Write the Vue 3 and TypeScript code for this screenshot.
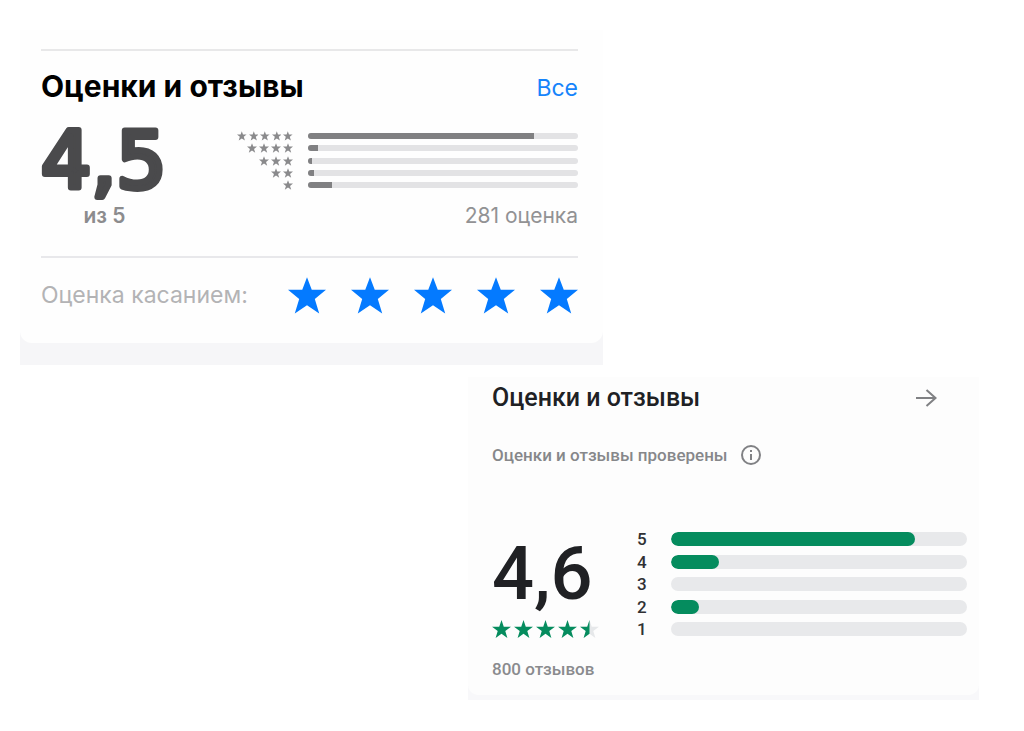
<script setup lang="ts">
interface Row {
  stars: number
  share: number
}

const storeRows: Row[] = [
  { stars: 5, share: 83.7 },
  { stars: 4, share: 3.8 },
  { stars: 3, share: 1.6 },
  { stars: 2, share: 2.2 },
  { stars: 1, share: 9 },
]

const playRows: Row[] = [
  { stars: 5, share: 82.5 },
  { stars: 4, share: 16.2 },
  { stars: 3, share: 0 },
  { stars: 2, share: 9.6 },
  { stars: 1, share: 0 },
]

const tapStar = '56,0 70,37 112,37 79,64 92,107 56,83 20,107 33,64 0,37 42,37'
const playStar = '10,0 12.4,7 20,7 14,11.6 16.2,19 10,14.6 3.8,19 6,11.6 0,7 7.6,7'
</script>

<template>
  <main class="page">
    <section class="store" aria-labelledby="store-title">
      <div class="store-sheet">
        <header class="store-head">
          <h2 id="store-title">Оценки и отзывы</h2>
          <a href="#all">Все</a>
        </header>
        <div class="store-summary">
          <div class="store-score">
            <svg class="store-value" viewBox="0 0 140 116" role="img" aria-label="4,5">
              <text x="0" y="84">4,5</text>
            </svg>
            <p class="store-of">из 5</p>
          </div>
          <div class="store-stats">
            <ul class="store-rows">
              <li v-for="row in storeRows" :key="row.stars">
                <span class="mini-stars">
                  <svg v-for="n in row.stars" :key="n" viewBox="0 0 112 108"><polygon :points="tapStar" /></svg>
                </span>
                <span class="store-track"><span class="store-fill" :style="{ width: row.share + '%' }"></span></span>
              </li>
            </ul>
            <p class="store-count">281 оценка</p>
          </div>
        </div>
        <div class="tap">
          <span class="tap-label">Оценка касанием:</span>
          <div class="tap-stars">
            <button v-for="n in 5" :key="n" type="button" :aria-label="`${n} из 5`">
              <svg viewBox="0 0 112 108"><polygon :points="tapStar" /></svg>
            </button>
          </div>
        </div>
      </div>
    </section>

    <section class="play" aria-labelledby="play-title">
      <div class="play-sheet">
        <header class="play-head">
          <h2 id="play-title">Оценки и отзывы</h2>
          <button type="button" class="icon-button" aria-label="Все отзывы">
            <svg class="arrow" viewBox="0 0 22 20"><path d="M1 10H20M11.5 2L20.5 10L11.5 18" /></svg>
          </button>
        </header>
        <div class="verified">
          <span>Оценки и отзывы проверены</span>
          <button type="button" class="icon-button" aria-label="Подробнее">
            <svg class="info" viewBox="0 0 20 20">
              <circle cx="10" cy="10" r="9" />
              <path d="M10 9V15M10 5V7" />
            </svg>
          </button>
        </div>
        <div class="play-body">
          <div class="play-score">
            <p class="play-value">4,6</p>
            <div class="play-stars" role="img" aria-label="4,6 из 5">
              <svg v-for="n in 4" :key="n" viewBox="0 0 20 19"><polygon :points="playStar" /></svg>
              <svg viewBox="0 0 20 19">
                <polygon class="empty" :points="playStar" />
                <polygon points="10,0 10,14.6 3.8,19 6,11.6 0,7 7.6,7" />
              </svg>
            </div>
            <p class="play-count">800 отзывов</p>
          </div>
          <ul class="play-rows">
            <li v-for="row in playRows" :key="row.stars">
              <span class="play-label">{{ row.stars }}</span>
              <span class="play-track"><span class="play-fill" :style="{ width: row.share + '%' }"></span></span>
            </li>
          </ul>
        </div>
      </div>
    </section>
  </main>
</template>

<style>
body {
  margin: 0;
  background: #fff;
}
</style>

<style scoped>
h2,
p,
ul {
  margin: 0;
  padding: 0;
}
ul {
  list-style: none;
}
svg {
  display: block;
}
button {
  padding: 0;
  border: 0;
  background: none;
  cursor: pointer;
}
.page {
  display: grid;
  grid-template-columns: 448fr 135fr 376fr;
  row-gap: 12px;
  padding: 30px 45px 31px 20px;
}

.store {
  grid-column: 1 / 3;
  padding-bottom: 22px;
  background: #f6f6f8;
  font-family: Inter, "Liberation Sans", sans-serif;
  font-optical-sizing: none;
}
.store-sheet {
  padding: 19px 25px 29px 21px;
  border-radius: 0 0 12px 12px;
  background: #fefefe;
}
.store-head {
  display: flex;
  align-items: center;
  justify-content: space-between;
  height: 70px;
  padding-bottom: 2px;
  border-top: 2px solid #e8e8e9;
}
.store-head h2 {
  font-size: 30px;
  font-weight: 700;
  color: #000;
}
.store-head a {
  padding-top: 4px;
  font-size: 23px;
  color: #1684fb;
  text-decoration: none;
}
.store-summary {
  display: flex;
  height: 133px;
  border-bottom: 2px solid #e8e8eb;
}
.store-score {
  flex: none;
  width: 196px;
}
.store-value {
  width: 140px;
  height: 116px;
  margin-top: -19px;
}
.store-value text {
  font-family: "DejaVu Sans", sans-serif;
  font-size: 79px;
  font-weight: 400;
  fill: #4a4a4c;
  stroke: #4a4a4c;
  stroke-width: 6px;
  stroke-linejoin: round;
}
.store-of {
  width: 127px;
  margin-top: -17px;
  font-size: 21px;
  line-height: 26px;
  font-weight: 600;
  text-align: center;
  color: #8c8c8e;
}
.store-stats {
  flex: 1;
  padding-top: 8px;
}
.store-rows {
  display: flex;
  flex-direction: column;
  justify-content: space-between;
  height: 59px;
}
.store-rows li {
  display: flex;
  align-items: center;
  gap: 15px;
}
.mini-stars {
  display: flex;
  flex: none;
  justify-content: flex-end;
  gap: 2px;
  width: 56px;
}
.mini-stars svg {
  width: 10px;
  height: 10px;
  fill: #8a8a8c;
}
.store-track {
  flex: 1;
  height: 6px;
  overflow: hidden;
  border-radius: 3px;
  background: #e3e3e5;
}
.store-fill {
  display: block;
  height: 100%;
  background: #808082;
}
.store-count {
  padding-top: 13px;
  font-size: 21px;
  line-height: 26px;
  text-align: right;
  color: #929294;
}
.tap {
  display: flex;
  align-items: center;
  justify-content: space-between;
  padding-top: 18px;
}
.tap-label {
  font-size: 23px;
  line-height: 38px;
  color: #b3b3b5;
}
.tap-stars {
  display: flex;
  gap: 25px;
}
.tap-stars svg {
  width: 38px;
  height: 37px;
  fill: #047aff;
}

.play {
  grid-column: 2 / 4;
  padding-bottom: 5px;
  background: #f8f8fa;
  font-family: Roboto, "Liberation Sans", sans-serif;
  font-weight: 500;
}
.play-sheet {
  padding: 3px 12px 15px 24px;
  border-radius: 0 0 10px 10px;
  background: #fdfdfd;
}
.play-head {
  display: flex;
  align-items: center;
  justify-content: space-between;
  padding-right: 30px;
}
.play-head h2 {
  font-size: 25px;
  line-height: 35px;
  font-weight: 500;
  color: #202124;
}
.icon-button svg {
  fill: none;
  stroke: #808184;
  stroke-width: 2;
}
.arrow {
  width: 22px;
  height: 20px;
}
.verified {
  display: flex;
  align-items: center;
  gap: 13px;
  padding-top: 29px;
  font-size: 17px;
  line-height: 22px;
  color: #86878a;
}
.info {
  width: 20px;
  height: 20px;
}
.play-body {
  display: flex;
  align-items: flex-start;
  padding-top: 63px;
}
.play-score {
  flex: none;
  width: 145px;
}
.play-value {
  padding-top: 5px;
  font-size: 74px;
  line-height: 80px;
  color: #202124;
}
.play-stars {
  display: flex;
  gap: 3px;
  padding-top: 6px;
}
.play-stars svg {
  width: 19px;
  height: 18px;
  fill: #058c5e;
}
.play-stars .empty {
  fill: #e6e8ea;
}
.play-count {
  padding-top: 20px;
  font-size: 17px;
  line-height: 22px;
  color: #8a8b8e;
}
.play-rows {
  display: flex;
  flex: 1;
  flex-direction: column;
  justify-content: space-between;
  height: 110px;
}
.play-rows li {
  display: flex;
  align-items: center;
  height: 20px;
}
.play-label {
  flex: none;
  width: 34px;
  font-size: 17px;
  line-height: 20px;
  color: #303134;
}
.play-track {
  flex: 1;
  height: 14px;
  overflow: hidden;
  border-radius: 7px;
  background: #e8e9eb;
}
.play-fill {
  display: block;
  height: 100%;
  border-radius: 7px;
  background: #058c5e;
}
</style>
